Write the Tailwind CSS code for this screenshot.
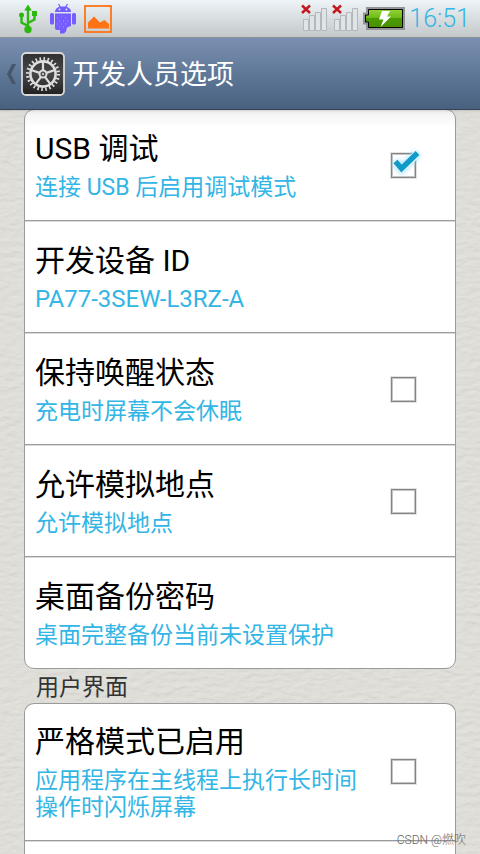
<!DOCTYPE html>
<html lang="zh-CN">
  <head>
    <meta charset="UTF-8" />
    <meta name="viewport" content="width=device-width, initial-scale=1.0" />
    <title>开发人员选项</title>
    <script src="https://cdn.jsdelivr.net/npm/@tailwindcss/browser@4"></script>
  </head>
  <body class="relative flex h-screen flex-col overflow-hidden bg-[#dddcd6] font-[Roboto,'Noto_Sans_CJK_SC',sans-serif]">
    <!-- Leather background -->
    <svg class="absolute inset-0 -z-10 h-full w-full" aria-hidden="true">
      <filter id="leather" x="0" y="0" width="100%" height="100%">
        <feTurbulence type="fractalNoise" baseFrequency="0.09 0.2" numOctaves="3" seed="4" />
        <feDiffuseLighting surfaceScale="0.6" diffuseConstant="1.06" lighting-color="#dfded8">
          <feDistantLight azimuth="250" elevation="70" />
        </feDiffuseLighting>
      </filter>
      <rect width="100%" height="100%" filter="url(#leather)" />
    </svg>

    <!-- Status bar -->
    <div class="z-10 flex h-[38px] shrink-0 items-center border-b border-[#8c959c] bg-linear-to-b from-[#eef4f7] to-[#c3c8ca] pr-2.5 pl-4">
      <div class="flex flex-1 items-center gap-1.5">
        <svg class="h-8 w-6" viewBox="0 0 24 32" fill="none" stroke="#2db80f" stroke-width="2.4">
          <path d="M12 27V6M12 23l-6.500-3.500V13M12 20l6.500-3.500V12" />
          <path d="M12 1.500l3.800 6H8.200z" fill="#2db80f" stroke="none" />
          <circle cx="12" cy="26.500" r="3.700" fill="#2db80f" stroke="none" />
          <circle cx="5.500" cy="12" r="2.500" fill="#2db80f" stroke="none" />
          <path d="M16 8h5v5h-5z" fill="#2db80f" stroke="none" />
        </svg>
        <svg class="h-8 w-8" viewBox="0 0 32 32" fill="#745cff">
          <path d="M9 9C9 5.500 12 3.500 17 3.500S25 5.500 25 9z" />
          <path d="M12.500 1l2 3.500M21.500 1l-2 3.500" stroke="#745cff" stroke-width="1.200" />
          <path d="M9 10.500h16v12.500l-4 1.500-1 4-2 2h-4V27h-3q-2 0-2-2z" />
          <rect x="4" y="10" width="4" height="11.500" rx="1.500" />
          <rect x="26" y="10" width="4" height="11.500" rx="1.500" />
          <path d="M11 15h1M15 13h1M19 15h1M13 18h1M17 18h1M21 18h1M11 21h1M15 21h1M19 21h1M13 24h1M17 24h1" stroke="#a99bff" stroke-width="1.200" />
          <circle cx="13.500" cy="6.500" r="1" fill="#e4e9ec" />
          <circle cx="20.500" cy="6.500" r="1" fill="#e4e9ec" />
        </svg>
        <svg class="h-7 w-7" viewBox="0 0 28 28">
          <rect x="1" y="1" width="26" height="26" fill="none" stroke="#ff7315" stroke-width="1.800" />
          <path d="M4 23.500v-6l6-6 6 6 4.500-2.500 4.500 4v4.500z" fill="#ff7315" />
        </svg>
      </div>
      <div class="flex items-center gap-1">
        <svg class="h-8 w-[27px]" viewBox="0 0 27 32">
          <path d="M2.500 16.500h5v11h-5zM8.500 12.500h5v15h-5zM14.500 9.500h5v18h-5zM20.500 5.500h5v22h-5z" fill="#dfe4e6" stroke="#b2b8bb" />
          <path d="M1 2.500l8 7.500M9 2.500l-8 7.500" stroke="#c5161d" stroke-width="2.400" />
        </svg>
        <svg class="h-8 w-[27px]" viewBox="0 0 27 32">
          <path d="M2.500 16.500h5v11h-5zM8.500 12.500h5v15h-5zM14.500 9.500h5v18h-5zM20.500 5.500h5v22h-5z" fill="#dfe4e6" stroke="#b2b8bb" />
          <path d="M1 2.500l8 7.500M9 2.500l-8 7.500" stroke="#c5161d" stroke-width="2.400" />
        </svg>
        <svg class="h-6 w-[42px]" viewBox="0 0 42 24">
          <linearGradient id="charge" x2="0" y2="1">
            <stop offset="0" stop-color="#93d43a" />
            <stop offset="0.48" stop-color="#6cb916" />
            <stop offset="0.5" stop-color="#4b9c00" />
            <stop offset="1" stop-color="#478f02" />
          </linearGradient>
          <path d="M3 0h39v23H3v-5.500H0v-12h3z" fill="#929497" />
          <path d="M5.500 2.500h34v18h-34v-5.500h-3v-7h3z" fill="url(#charge)" stroke="#000" />
          <path d="M19 4h8l-3 5.500h4L17.500 20l3-7.500H16z" fill="#fff" />
        </svg>
        <span class="text-[25px] leading-8 font-light text-[#33b5e5]">16:51</span>
      </div>
    </div>

    <!-- Action bar -->
    <header class="z-10 flex h-[72px] shrink-0 items-center gap-[7px] border-b border-[#344357] bg-linear-to-b from-[#7a90b2] to-[#47617f] pl-1.5 shadow-sm">
      <button class="flex items-center" aria-label="返回">
        <svg class="h-6 w-[15px]" viewBox="0 0 15 24" fill="#46566c">
          <path d="M6 2h4L5 12l5 10H6L1 12z" />
        </svg>
        <svg class="h-11 w-11" viewBox="0 0 44 44">
          <linearGradient id="tile" x2="0" y2="1">
            <stop offset="0" stop-color="#303030" />
            <stop offset="0.5" stop-color="#484848" />
            <stop offset="1" stop-color="#202020" />
          </linearGradient>
          <rect x="1" y="1" width="42" height="42" rx="4" fill="url(#tile)" stroke="#d8d8d8" stroke-width="1.800" />
          <g fill="none" stroke="#dedede">
            <circle cx="22" cy="22" r="15.300" stroke-width="3.400" stroke-dasharray="1.600 2.406" />
            <circle cx="22" cy="22" r="12.600" stroke-width="2.600" />
            <circle cx="22" cy="22" r="3.500" stroke-width="2" />
            <path d="M22 18.500V10M25.300 20.900l8-2.600M24 24.800l5 6.900M20 24.800l-5 6.900M18.700 20.900l-8-2.600" stroke-width="2.200" />
          </g>
          <circle cx="22" cy="22" r="1.200" fill="#c8c8c8" />
        </svg>
      </button>
      <h1 class="pt-0.5 text-[27px] leading-10 text-white">开发人员选项</h1>
    </header>

    <main class="-mt-px flex-1 overflow-hidden px-6">
      <section class="rounded-[10px] border border-[#999a9b] bg-white bg-linear-to-b from-[#f0f0f0] to-white to-3%">
        <label class="flex items-center gap-6 border-b border-[#999a9b] py-[19px] pr-[39px] pl-2.5">
          <span class="flex-1">
            <span class="block text-[30px] leading-10 text-black">USB 调试</span>
            <span class="mt-[5px] block text-[23px] leading-[27px] text-[#33b5e5]">连接 USB 后启用调试模式</span>
          </span>
          <span class="relative size-[25px]">
            <input type="checkbox" checked class="block size-[25px] appearance-none border border-[#858585] bg-white shadow-[0_0_0_1px_#e2e2e2,inset_0_0_0_1px_#c4c4c4]" />
            <svg class="pointer-events-none absolute -top-1.5 -left-1 h-8 w-9 drop-shadow-[0_0_2px_#8fdcf8]" viewBox="0 0 36 32">
              <path d="M8.500 15l6 7L30.500 6.500" fill="none" stroke="#e2f6fd" stroke-width="7.500" />
              <path d="M8.500 14.500l6 7L30.500 6" fill="none" stroke="#119bcb" stroke-width="5.400" />
            </svg>
          </span>
        </label>
        <div class="border-t border-b border-t-[#dcdcdc] border-b-[#999a9b] pt-[19px] pr-[39px] pb-[19px] pl-2.5">
          <h2 class="text-[30px] leading-10 text-black">开发设备 ID</h2>
          <p class="mt-[5px] text-[24px] leading-[27px] text-[#33b5e5]">PA77-3SEW-L3RZ-A</p>
        </div>
        <label class="flex items-center gap-6 border-t border-b border-t-[#dcdcdc] border-b-[#999a9b] py-[19px] pr-[39px] pl-2.5">
          <span class="flex-1">
            <span class="block text-[30px] leading-10 text-black">保持唤醒状态</span>
            <span class="mt-[5px] block text-[23px] leading-[27px] text-[#33b5e5]">充电时屏幕不会休眠</span>
          </span>
          <input type="checkbox" class="size-[25px] appearance-none border border-[#858585] bg-white shadow-[0_0_0_1px_#e2e2e2,inset_0_0_0_1px_#c4c4c4]" />
        </label>
        <label class="flex items-center gap-6 border-t border-b border-t-[#dcdcdc] border-b-[#999a9b] py-[19px] pr-[39px] pl-2.5">
          <span class="flex-1">
            <span class="block text-[30px] leading-10 text-black">允许模拟地点</span>
            <span class="mt-[5px] block text-[23px] leading-[27px] text-[#33b5e5]">允许模拟地点</span>
          </span>
          <input type="checkbox" class="size-[25px] appearance-none border border-[#858585] bg-white shadow-[0_0_0_1px_#e2e2e2,inset_0_0_0_1px_#c4c4c4]" />
        </label>
        <div class="border-t border-[#dcdcdc] py-[19px] pr-[39px] pl-2.5">
          <h2 class="text-[30px] leading-10 text-black">桌面备份密码</h2>
          <p class="mt-[5px] text-[23px] leading-[27px] text-[#33b5e5]">桌面完整备份当前未设置保护</p>
        </div>
      </section>

      <h2 class="pt-1 pl-3 text-[23px] leading-[30px] text-[#333]">用户界面</h2>

      <section class="rounded-t-[10px] border border-b-0 border-[#999a9b] bg-white">
        <label class="flex items-center gap-6 border-b border-[#999a9b] pt-[18px] pr-[39px] pb-[19px] pl-2.5">
          <span class="flex-1">
            <span class="block text-[30px] leading-10 text-black">严格模式已启用</span>
            <span class="mt-[5px] block text-[23px] leading-[27px] text-[#33b5e5]">应用程序在主线程上执行长时间操作时闪烁屏幕</span>
          </span>
          <input type="checkbox" class="size-[25px] appearance-none border border-[#858585] bg-white shadow-[0_0_0_1px_#e2e2e2,inset_0_0_0_1px_#c4c4c4]" />
        </label>
        <div class="h-28 border-t border-[#dcdcdc]"></div>
      </section>
    </main>

    <span class="absolute right-3.5 bottom-1.5 text-[12px] leading-4 font-light text-[#666]">CSDN @燃吹</span>
  </body>
</html>
